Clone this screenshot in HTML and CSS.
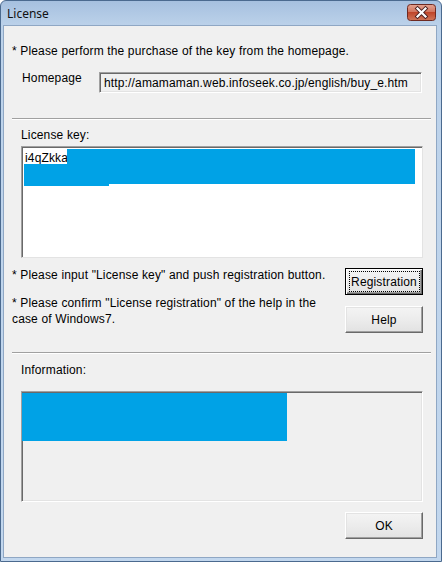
FILE: index.html
```html
<!DOCTYPE html>
<html>
<head>
<meta charset="utf-8">
<link rel="stylesheet" href="styles.css">
</head>
<body>
<div class="window">
  <div class="titlebar">
    <span class="title">License</span>
    <span class="close">
      <svg width="29" height="17" viewBox="0 0 29 17">
        <defs>
          <linearGradient id="cg" x1="0" y1="0" x2="0" y2="1">
            <stop offset="0" stop-color="#e4a392"/>
            <stop offset="0.45" stop-color="#d2765f"/>
            <stop offset="0.5" stop-color="#c0462a"/>
            <stop offset="1" stop-color="#d0775a"/>
          </linearGradient>
        </defs>
        <rect x="0.5" y="0.5" width="28" height="16" rx="3" fill="url(#cg)" stroke="#6e2a22"/>
        <path d="M10.5 4.5 L18.5 12.5 M18.5 4.5 L10.5 12.5" stroke="#4a2020" stroke-width="4" stroke-linecap="square"/>
        <path d="M10.5 4.5 L18.5 12.5 M18.5 4.5 L10.5 12.5" stroke="#ffffff" stroke-width="2.2" stroke-linecap="square"/>
      </svg>
    </span>
  </div>
  <div class="client">
    <p class="note first">* Please perform the purchase of the key from the homepage.</p>
    <div class="homerow">
      <span class="homelabel">Homepage</span>
      <div class="urlfield">http://amamaman.web.infoseek.co.jp/english/buy_e.htm</div>
    </div>
    <div class="sep sep1"></div>
    <p class="label keylabel">License key:</p>
    <div class="box keybox">
      <span class="keytext">i4qZkka</span>
      <span class="mask m1"></span>
      <span class="mask m2"></span>
      <span class="mask m3"></span>
    </div>
    <div class="midrow">
      <div class="midtext">
        <p class="note">* Please input "License key" and push registration button.</p>
        <p class="note second">* Please confirm "License registration" of the help in the case of Windows7.</p>
      </div>
      <div class="btncol">
        <button class="btn default"><span class="focus">Registration</span></button>
        <button class="btn">Help</button>
      </div>
    </div>
    <div class="sep sep2"></div>
    <p class="label infolabel">Information:</p>
    <div class="box infobox">
      <span class="mask m4"></span>
    </div>
    <div class="okrow">
      <button class="btn">OK</button>
    </div>
  </div>
</div>
</body>
</html>
```

FILE: styles.css
```css
html, body {
  margin: 0;
  padding: 0;
  background: #ffffff;
}
.window {
  width: 442px;
  height: 562px;
  box-sizing: border-box;
  display: flex;
  flex-direction: column;
  background: linear-gradient(to bottom, #a6c0df 0px, #bcd2ea 25px, #c2d7ee 100%);
  border: 1px solid #4b6a8f;
  border-radius: 6px 6px 0 0;
  font-family: "Liberation Sans", Arial, sans-serif;
  font-size: 12px;
  letter-spacing: 0.15px;
  color: #000;
}
.titlebar {
  height: 24px;
  display: flex;
  align-items: flex-start;
  justify-content: space-between;
  padding: 0 5px 0 6px;
}
.title {
  font-family: "Noto Sans", "DejaVu Sans", sans-serif;
  font-size: 12px;
  letter-spacing: 0;
  line-height: 26px;
  color: #111;
}
.close {
  margin-top: 3px;
  display: block;
  height: 17px;
}
.close svg { display: block; }
.client {
  flex: 1;
  margin: 0 4px 3px 2px;
  background: #f0f0f0;
  border: 1px solid #8fa7c4;
  padding: 0 5px 0 8px;
  display: flex;
  flex-direction: column;
  position: relative;
}
p { margin: 0; }
.note {
  line-height: 16px;
}
.first {
  margin-top: 17px;
}
.homerow {
  display: flex;
  align-items: center;
  margin-top: 13px;
  margin-left: 10px;
}
.homelabel {
  width: 77px;
  line-height: 14px;
  margin-top: -10px;
}
.urlfield {
  width: 323px;
  height: 21px;
  box-sizing: border-box;
  background: #f0f0f0;
  border-style: solid;
  border-width: 1px;
  border-color: #a0a0a0 #ffffff #ffffff #a0a0a0;
  box-shadow: inset 1px 1px 0 #696969, inset -1px -1px 0 #e3e3e3;
  padding: 2px 0 0 4px;
  line-height: 16px;
  white-space: nowrap;
}
.sep {
  height: 1px;
  background: #a0a0a0;
  border-bottom: 1px solid #ffffff;
}
.sep1 { margin-top: 25px; }
.label {
  line-height: 14px;
  margin-left: 9px;
}
.keylabel { margin-top: 8px; }
.box {
  position: relative;
  box-sizing: border-box;
  width: 402px;
  margin-left: 9px;
  border-style: solid;
  border-width: 1px;
  border-color: #a0a0a0 #ffffff #ffffff #a0a0a0;
  box-shadow: inset 1px 1px 0 #696969, inset -1px -1px 0 #e3e3e3;
}
.keybox {
  height: 112px;
  margin-top: 4px;
  background: #ffffff;
  border-color: #a0a0a0 #e3e3e3 #e3e3e3 #a0a0a0;
  box-shadow: inset 1px 1px 0 #696969;
}
.keytext {
  display: block;
  padding: 3px 0 0 3px;
  line-height: 16px;
}
.mask {
  position: absolute;
  background: #00a2e6;
}
.m1 { left: 45px; top: 2px; width: 348px; height: 15px; }
.m2 { left: 2px; top: 17px; width: 391px; height: 20px; }
.m3 { left: 2px; top: 37px; width: 85px; height: 2px; }
.midrow {
  display: flex;
  justify-content: space-between;
  margin-top: 9px;
}
.midtext {
  width: 325px;
}
.second {
  margin-top: 12px;
}
.btncol {
  display: flex;
  flex-direction: column;
  gap: 11px;
  margin-right: 8px;
  margin-top: 1px;
}
.btn {
  width: 78px;
  height: 27px;
  box-sizing: border-box;
  font-family: "Liberation Sans", Arial, sans-serif;
  font-size: 12px;
  letter-spacing: 0.15px;
  color: #000;
  background: linear-gradient(to bottom, #f4f4f4 0%, #ececec 50%, #e2e2e2 100%);
  border-style: solid;
  border-width: 1px;
  border-color: #ffffff #696969 #696969 #ffffff;
  box-shadow: inset -1px -1px 0 #a0a0a0, inset 1px 1px 0 #e3e3e3;
  padding: 0;
  display: flex;
  align-items: center;
  justify-content: center;
}
.btn.default {
  border: 1px solid #000;
  box-shadow: inset 1px 1px 0 #ffffff, inset -1px -1px 0 #696969, inset -2px -2px 0 #a0a0a0;
}
.focus {
  display: flex;
  align-items: center;
  justify-content: center;
  width: 71px;
  height: 21px;
  box-sizing: border-box;
  border: 1px dotted #000;
  white-space: nowrap;
}
.sep2 { margin-top: 19px; }
.infolabel { margin-top: 9px; }
.infobox {
  height: 111px;
  margin-top: 14px;
  background: #f0f0f0;
}
.m4 { left: 0px; top: 1px; width: 265px; height: 48px; }
.okrow {
  display: flex;
  justify-content: flex-end;
  margin-top: 10px;
  margin-right: 8px;
}
```
